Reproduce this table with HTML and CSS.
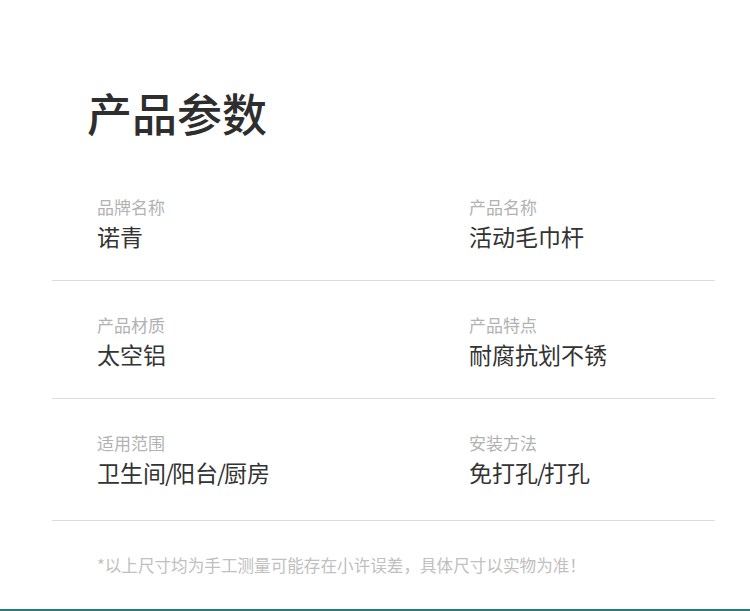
FILE: index.html
```html
<!DOCTYPE html>
<html lang="zh">
<head>
<meta charset="utf-8">
<title>产品参数</title>
<link rel="stylesheet" href="styles.css">
</head>
<body>
<div class="page">
  <h1 class="title">产品参数</h1>
  <div class="specs">
    <div class="row row-first">
      <div class="cell"><div class="label">品牌名称</div><div class="value">诺青</div></div>
      <div class="cell"><div class="label">产品名称</div><div class="value">活动毛巾杆</div></div>
    </div>
    <div class="row">
      <div class="cell"><div class="label">产品材质</div><div class="value">太空铝</div></div>
      <div class="cell"><div class="label">产品特点</div><div class="value">耐腐抗划不锈</div></div>
    </div>
    <div class="row row-last">
      <div class="cell"><div class="label">适用范围</div><div class="value">卫生间<span class="slash">/</span>阳台<span class="slash">/</span>厨房</div></div>
      <div class="cell"><div class="label">安装方法</div><div class="value">免打孔<span class="slash">/</span>打孔</div></div>
    </div>
    <p class="note">*以上尺寸均为手工测量可能存在小许误差，具体尺寸以实物为准！</p>
  </div>
  <div class="bottom-bar"></div>
</div>
</body>
</html>
```
FILE: styles.css
```css
html, body {
  margin: 0;
  padding: 0;
  background: #ffffff;
}
body {
  font-family: "Noto Sans CJK SC", "Noto Sans", sans-serif;
}
.page {
  height: 611px;
  box-sizing: border-box;
  padding-top: 90px;
  display: flex;
  flex-direction: column;
  overflow: hidden;
}
.title {
  margin: 0;
  padding-left: 87px;
  font-size: 45px;
  line-height: 46px;
  font-weight: 500;
  color: #2e2e2e;
}
.specs {
  margin: 62px 35px 0 52px;
}
.row {
  display: grid;
  grid-template-columns: 372px 1fr;
  padding: 35px 0 32px 45px;
  border-bottom: 1px solid #dcdcdc;
}
.row-first {
  padding-top: 0;
}
.row-last {
  padding-bottom: 36px;
}
.label {
  font-size: 17px;
  line-height: 17px;
  color: #b2b2b2;
}
.value {
  margin-top: 10px;
  font-size: 23px;
  line-height: 23px;
  color: #333333;
}
.slash {
  letter-spacing: -2px;
  margin-left: -1px;
}
.note {
  margin: 36px 0 0 0;
  padding-left: 45px;
  font-size: 16.6px;
  line-height: 16px;
  color: #c0c0c0;
}
.bottom-bar {
  margin-top: auto;
  height: 2px;
  background: #2a7a76;
}
```
